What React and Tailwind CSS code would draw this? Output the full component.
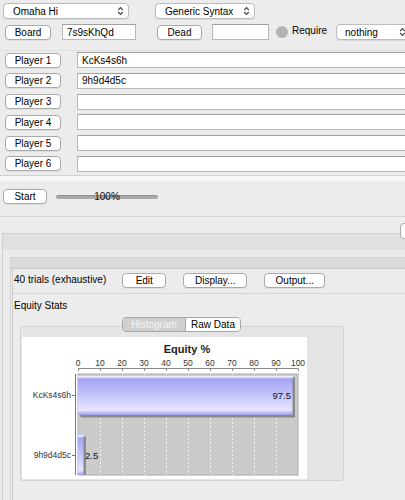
import React from "react";

const Chev = () => (
  <svg width="7" height="10" viewBox="0 0 7 10" className="shrink-0">
    <path d="M1.2 4 L3.5 1.6 L5.8 4" fill="none" stroke="#444" strokeWidth="1.1" />
    <path d="M1.2 6 L3.5 8.4 L5.8 6" fill="none" stroke="#444" strokeWidth="1.1" />
  </svg>
);

function Select({ className, children }) {
  return (
    <div
      className={`flex items-center justify-between h-[16px] bg-white border border-[#bcbcbc] rounded-[4px] shadow-[0_1px_0_rgba(0,0,0,0.08)] pr-[4px] text-[10px] text-black shrink-0 ${className}`}
    >
      <span>{children}</span>
      <Chev />
    </div>
  );
}

function Btn({ className, children }) {
  return (
    <div
      className={`flex items-center justify-center h-[15px] bg-white border border-[#aaaaaa] rounded-[4px] shadow-[0_1px_0_rgba(0,0,0,0.06)] text-[10px] text-black shrink-0 ${className}`}
    >
      {children}
    </div>
  );
}

function Input({ className, children }) {
  return (
    <div
      className={`flex items-center h-[16px] bg-white border border-[#b8b8b8] border-t-[#a0a0a0] pl-[4px] text-[10px] text-black shrink-0 ${className}`}
    >
      {children}
    </div>
  );
}

function Chart() {
  const ticks = [0, 10, 20, 30, 40, 50, 60, 70, 80, 90, 100];
  const x0 = 56;
  const sc = 2.2;
  const ff = "Liberation Sans, Arial, sans-serif";
  return (
    <svg width="285" height="142" viewBox="0 0 285 142" className="block">
      <defs>
        <linearGradient id="bar" x1="0" y1="0" x2="0" y2="1">
          <stop offset="0" stopColor="#b8b8f8" />
          <stop offset="0.04" stopColor="#f4f4ff" />
          <stop offset="0.1" stopColor="#a4a4f4" />
          <stop offset="0.5" stopColor="#c4c4fa" />
          <stop offset="0.88" stopColor="#e6e6ff" />
          <stop offset="1" stopColor="#9c9ce6" />
        </linearGradient>
      </defs>
      <text x="165" y="16" textAnchor="middle" fontFamily={ff} fontWeight="bold" fontSize="11" fill="#222">
        Equity %
      </text>
      {ticks.map((t) => (
        <text key={t} x={x0 + t * sc} y="28.5" textAnchor="middle" fontFamily={ff} fontSize="8.5" fill="#333">
          {t}
        </text>
      ))}
      <line x1={x0} y1="31.5" x2={x0 + 220} y2="31.5" stroke="#888" strokeWidth="1" />
      {ticks.map((t) => (
        <line key={"tk" + t} x1={x0 + t * sc + 0.5} y1="31.5" x2={x0 + t * sc + 0.5} y2="34" stroke="#888" strokeWidth="1" />
      ))}
      <rect x={x0} y="37" width="220" height="101" fill="#cbcbcb" stroke="#a8a8a8" strokeWidth="1" />
      {ticks.slice(1, 10).map((t) => (
        <line key={"g" + t} x1={x0 + t * sc + 0.5} y1="37" x2={x0 + t * sc + 0.5} y2="138" stroke="#f2f2f2" strokeWidth="1" strokeDasharray="2 2" />
      ))}
      <line x1="53.5" y1="37" x2="53.5" y2="138" stroke="#777" strokeWidth="1" />
      <line x1="50" y1="58.5" x2="53.5" y2="58.5" stroke="#777" strokeWidth="1" />
      <line x1="50" y1="118.5" x2="53.5" y2="118.5" stroke="#777" strokeWidth="1" />
      {/* bar 1 */}
      <rect x={x0 + 2.5} y="40.5" width={97.5 * sc} height="40" fill="#8a8a8a" />
      <rect x={x0} y="38" width={97.5 * sc} height="40" fill="url(#bar)" />
      <text x="269" y="62" textAnchor="end" fontFamily={ff} fontSize="9.5" fill="#111">
        97.5
      </text>
      {/* bar 2 */}
      <rect x={x0 + 2.5} y="99.5" width={2.5 * sc} height="38.5" fill="#8a8a8a" />
      <rect x={x0} y="97" width={2.5 * sc} height="41" fill="url(#bar)" />
      <text x="63" y="122" fontFamily={ff} fontSize="9.5" fill="#111">
        2.5
      </text>
      <text x="49" y="61" textAnchor="end" fontFamily={ff} fontSize="8.5" fill="#333">
        KcKs4s6h
      </text>
      <text x="49" y="121" textAnchor="end" fontFamily={ff} fontSize="8.5" fill="#333">
        9h9d4d5c
      </text>
    </svg>
  );
}

export default function App() {
  const players = ["KcKs4s6h", "9h9d4d5c", "", "", "", ""];
  return (
    <div className="w-[405px] h-[500px] overflow-hidden bg-[#ececec] font-['Liberation_Sans',Arial,sans-serif] text-[10px] text-black flex flex-col">
      {/* top controls */}
      <div className="pt-[3px] flex flex-col shrink-0">
        <div className="flex items-center h-[16px]">
          <Select className="ml-[3px] w-[126px] pl-[9px]">Omaha Hi</Select>
          <Select className="ml-[26px] w-[100px] pl-[9px]">Generic Syntax</Select>
        </div>
        <div className="flex items-center h-[16px] mt-[5px]">
          <Btn className="ml-[5px] w-[46px]">Board</Btn>
          <Input className="ml-[11px] w-[74px]">7s9sKhQd</Input>
          <Btn className="ml-[21px] w-[45px]">Dead</Btn>
          <Input className="ml-[10px] w-[57px]" />
          <div className="ml-[7px] w-[12px] h-[12px] rounded-full bg-[#b3b3b3] shrink-0" />
          <span className="ml-[4px] -mt-[4px] shrink-0">Require</span>
          <Select className="ml-[9px] w-[75px] pl-[8px]">nothing</Select>
        </div>
        <div className="mt-[10px] h-px bg-[#e0e0e0]" />
      </div>

      {/* players */}
      <div className="mt-px flex flex-col gap-[4.8px] shrink-0">
        {players.map((p, i) => (
          <div key={i} className="flex items-center h-[16px]">
            <Btn className="ml-[5px] w-[56px]">{`Player ${i + 1}`}</Btn>
            <Input className="ml-[16px] w-[340px]">{p}</Input>
          </div>
        ))}
      </div>

      <div className="mt-[3px] h-px bg-[#d2d2d2] shrink-0" />
      <div className="h-[5px] bg-[#f7f7f7] shrink-0" />

      {/* start row */}
      <div className="mt-[8px] flex items-center h-[16px] shrink-0">
        <Btn className="ml-[3px] w-[44px]">Start</Btn>
        <div className="ml-[9px] w-[102px] h-[12px] relative flex items-center justify-center shrink-0">
          <div className="absolute left-0 right-0 top-[4px] h-[4px] rounded-full bg-[#a9a9a9] border-t border-[#8e8e8e]" />
          <span className="relative text-[10px] text-[#111]">100%</span>
        </div>
      </div>

      <div className="mt-[11px] h-px bg-[#d5d5d5] shrink-0" />

      {/* outer tabbed panel */}
      <div className="mt-[16px] ml-[2px] flex-1 flex flex-col border-l border-t border-[#cfcfcf] relative">
        <div className="absolute right-[-12px] top-[-11px] w-[17px] h-[16px] bg-white border border-[#a9a9a9] rounded-[4px]" />
        <div className="h-[16px] bg-[#e1e1e1] shrink-0" />
        <div className="flex-1 bg-[#ebebeb] pl-[7px] pt-[7px] flex flex-col">
          <div className="flex-1 flex flex-col border-l border-t border-[#d3d3d3]">
            <div className="h-[11px] bg-[#dcdcdc] border-b border-[#c9c9c9] shrink-0" />
            <div className="flex-1 flex flex-col bg-[#ececec] ml-px border-l border-[#cdcdcd]">
              <div className="h-[25px] flex items-start border-b border-[#d6d6d6] shrink-0">
                <span className="ml-[1px] mt-[3px]">40 trials (exhaustive)</span>
                <Btn className="ml-[16px] mt-[4px] w-[44px]">Edit</Btn>
                <Btn className="ml-[17px] mt-[4px] w-[64px]">Display...</Btn>
                <Btn className="ml-[17px] mt-[4px] w-[61px]">Output...</Btn>
              </div>
              <div className="mt-[4px] ml-[1px]">Equity Stats</div>
              <div className="mt-[13px] ml-[7px] w-[324px] h-[155px] bg-[#e5e5e5] border border-[#d2d2d2] rounded-[3px] relative">
                <div className="absolute left-[101px] top-[-10px] flex h-[15px] border border-[#a6a6a6] rounded-[4px] overflow-hidden">
                  <div className="w-[62px] flex items-center justify-center bg-[#d0d0d0] text-[#f3f3f3]">Histogram</div>
                  <div className="w-[55px] flex items-center justify-center bg-white text-black border-l border-[#a6a6a6]">Raw Data</div>
                </div>
                <div className="ml-[1px] mt-[10px] w-[285px] h-[142px] bg-white">
                  <Chart />
                </div>
              </div>
            </div>
          </div>
        </div>
      </div>
    </div>
  );
}
